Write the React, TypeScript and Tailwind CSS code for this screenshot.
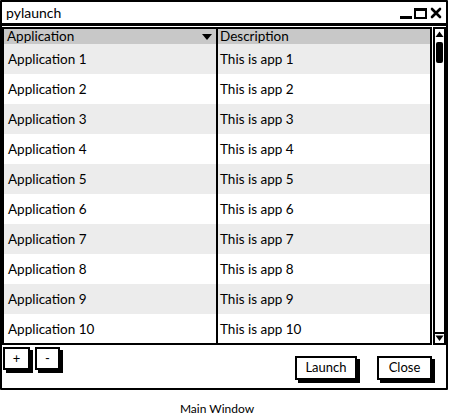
import React from "react";

const apps = Array.from({ length: 10 }, (_, i) => i + 1);

function Btn({ label, className }: { label: string; className: string }) {
  return (
    <div
      className={`border-2 border-black bg-white flex items-center justify-center text-[13px] shadow-[3px_3px_0_#000] ${className}`}
    >
      {label}
    </div>
  );
}

export default function App() {
  return (
    <div
      className="w-[450px] h-[419px] bg-white text-black relative"
      style={{ fontFamily: 'Lato, "Liberation Sans", sans-serif' }}
    >
      <div className="w-[448px] h-[390px] border-2 border-black rounded-[1px] flex flex-col">
        {/* title bar */}
        <div className="h-[24px] flex items-center justify-between pl-[4px] pr-[4px] border-b-[3px] border-black shrink-0">
          <span className="text-[14px] leading-none">pylaunch</span>
          <div className="flex items-end gap-[2px] h-[14px]">
            <div className="w-[12px] h-[3px] bg-black mb-[1px]" />
            <div className="w-[13px] h-[11px] border-2 border-t-[3px] border-black mb-[1px]" />
            <svg width="12" height="12" viewBox="0 0 12 12" className="ml-[1px] mb-[1px]">
              <path d="M2 2 L10 10 M10 2 L2 10" stroke="#000" strokeWidth="2.6" strokeLinecap="round" />
            </svg>
          </div>
        </div>

        {/* table + scrollbar */}
        <div className="flex pt-[1px] shrink-0">
          <div className="w-[432px] h-[318px] border-2 border-black flex flex-col overflow-hidden">
            <div className="h-[15px] bg-[#c8c8c8] flex text-[13.5px] leading-[15px] shrink-0">
              <div className="w-[214px] flex items-center justify-between pl-[3px] pr-[4px] border-r-2 border-black">
                <span>Application</span>
                <svg width="10" height="6" viewBox="0 0 10 6">
                  <path d="M0 0 H10 L5 6 Z" fill="#000" />
                </svg>
              </div>
              <div className="pl-[2px]">Description</div>
            </div>
            {apps.map((n) => (
              <div
                key={n}
                className={`h-[30px] flex text-[13.5px] shrink-0 ${n % 2 ? "bg-[#ececec]" : "bg-white"}`}
              >
                <div className="w-[214px] flex items-center pl-[4px] border-r-2 border-black">
                  Application {n}
                </div>
                <div className="flex items-center pl-[2px]">This is app {n}</div>
              </div>
            ))}
          </div>
          <div className="w-[13px] h-[318px] border-2 border-black ml-[1px] flex flex-col items-center justify-between bg-white">
            <div className="flex flex-col items-center w-full">
              <svg width="9" height="9" viewBox="0 0 9 9" className="mt-[1px]">
                <path d="M0.5 7 H8.5 L4.5 1.5 Z" fill="#000" />
              </svg>
              <div className="w-[7px] h-[21px] bg-black rounded-[2px] mt-[3px]" />
            </div>
            <div className="w-full border-t-2 border-black flex justify-center pt-[1px] pb-[1px]">
              <svg width="9" height="7" viewBox="0 0 9 7">
                <path d="M0.5 0.5 H8.5 L4.5 6 Z" fill="#000" />
              </svg>
            </div>
          </div>
        </div>

        {/* buttons */}
        <div className="flex-1 flex items-start justify-between pl-[1px] pr-[14px] pt-[2px]">
          <div className="flex gap-[5px]">
            <Btn label="+" className="w-[27px] h-[23px]" />
            <Btn label="-" className="w-[25px] h-[23px]" />
          </div>
          <div className="flex gap-[20px] pt-[9px]">
            <Btn label="Launch" className="w-[62px] h-[24px]" />
            <Btn label="Close" className="w-[55px] h-[24px]" />
          </div>
        </div>
      </div>
      <div className="text-[12px] text-center w-[434px] mt-[10px]">Main Window</div>
    </div>
  );
}
